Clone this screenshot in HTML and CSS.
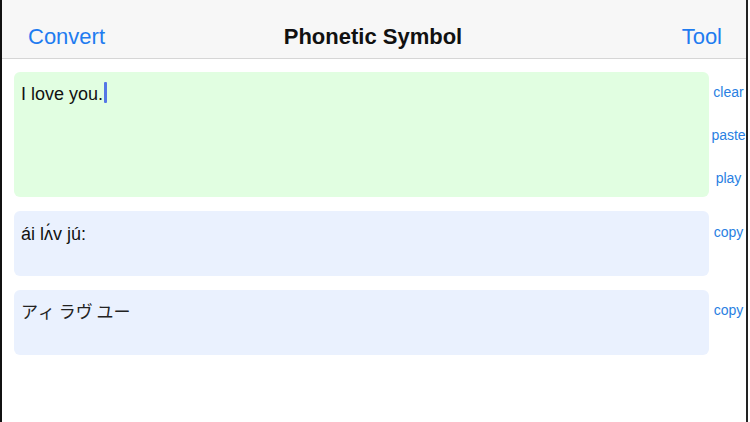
FILE: index.html
```html
<!DOCTYPE html>
<html>
<head>
<meta charset="utf-8">
<link rel="stylesheet" href="styles.css">
</head>
<body>
<div class="screen">
  <header class="navbar">
    <span class="nav-btn nav-left">Convert</span>
    <span class="nav-title">Phonetic Symbol</span>
    <span class="nav-btn nav-right">Tool</span>
  </header>
  <main class="content">
    <div class="row">
      <div class="field field-input"><span class="text">I love you.</span><span class="caret"></span></div>
      <div class="actions actions-input">
        <span class="action">clear</span>
        <span class="action">paste</span>
        <span class="action">play</span>
      </div>
    </div>
    <div class="row">
      <div class="field field-output"><span class="text">ái lʌ́v jú:</span></div>
      <div class="actions"><span class="action">copy</span></div>
    </div>
    <div class="row">
      <div class="field field-output field-kana"><span class="text kana">アィ ラヴ ユー</span></div>
      <div class="actions actions-kana"><span class="action">copy</span></div>
    </div>
  </main>
</div>
</body>
</html>
```
FILE: styles.css
```css
* { box-sizing: border-box; }
html, body { margin: 0; padding: 0; background: #fff; }
body {
  width: 750px;
  height: 422px;
  overflow: hidden;
  font-family: "Liberation Sans", Arial, sans-serif;
}
.screen {
  width: 748px;
  height: 422px;
  border-left: 2px solid #111;
  border-right: 2px solid #222;
  background: #fff;
}
.navbar {
  height: 59px;
  padding: 15px 24px 0 26px;
  background: #f7f7f7;
  border-bottom: 1px solid #d6d6d6;
  display: grid;
  grid-template-columns: 1fr auto 1fr;
  align-items: center;
}
.nav-btn {
  font-size: 22px;
  line-height: 26px;
  color: #1f7cf0;
}
.nav-left { justify-self: start; }
.nav-right { justify-self: end; }
.nav-title {
  font-size: 22px;
  line-height: 26px;
  font-weight: bold;
  color: #111;
  margin-left: -4px;
}
.content {
  padding: 13px 0 0 12px;
  display: flex;
  flex-direction: column;
  gap: 14px;
}
.row {
  display: grid;
  grid-template-columns: 695px 1fr;
}
.field {
  border-radius: 6px;
  padding: 11px 7px 10px;
  font-size: 18px;
  line-height: 22px;
  color: #111;
  display: flex;
  align-items: flex-start;
}
.field-input {
  height: 125px;
  background: #e1fee1;
}
.field-output {
  height: 65px;
  background: #eaf1fe;
  padding-top: 12px;
}
.field-kana { padding-top: 10px; }
.kana {
  font-family: "Noto Sans CJK JP", sans-serif;
  font-size: 17px;
  line-height: 22px;
  color: #222;
}
.caret {
  width: 3px;
  height: 21px;
  margin-left: 1px;
  margin-top: -1px;
  border-radius: 1px;
  background: #5577e6;
}
.actions {
  display: flex;
  flex-direction: column;
  align-items: center;
  padding: 13px 0 0 2px;
  gap: 27px;
}
.actions-input { padding-top: 12px; }
.action {
  font-size: 14px;
  line-height: 16px;
  color: #2a7fe2;
}
.actions-kana { padding-top: 12px; }
```
